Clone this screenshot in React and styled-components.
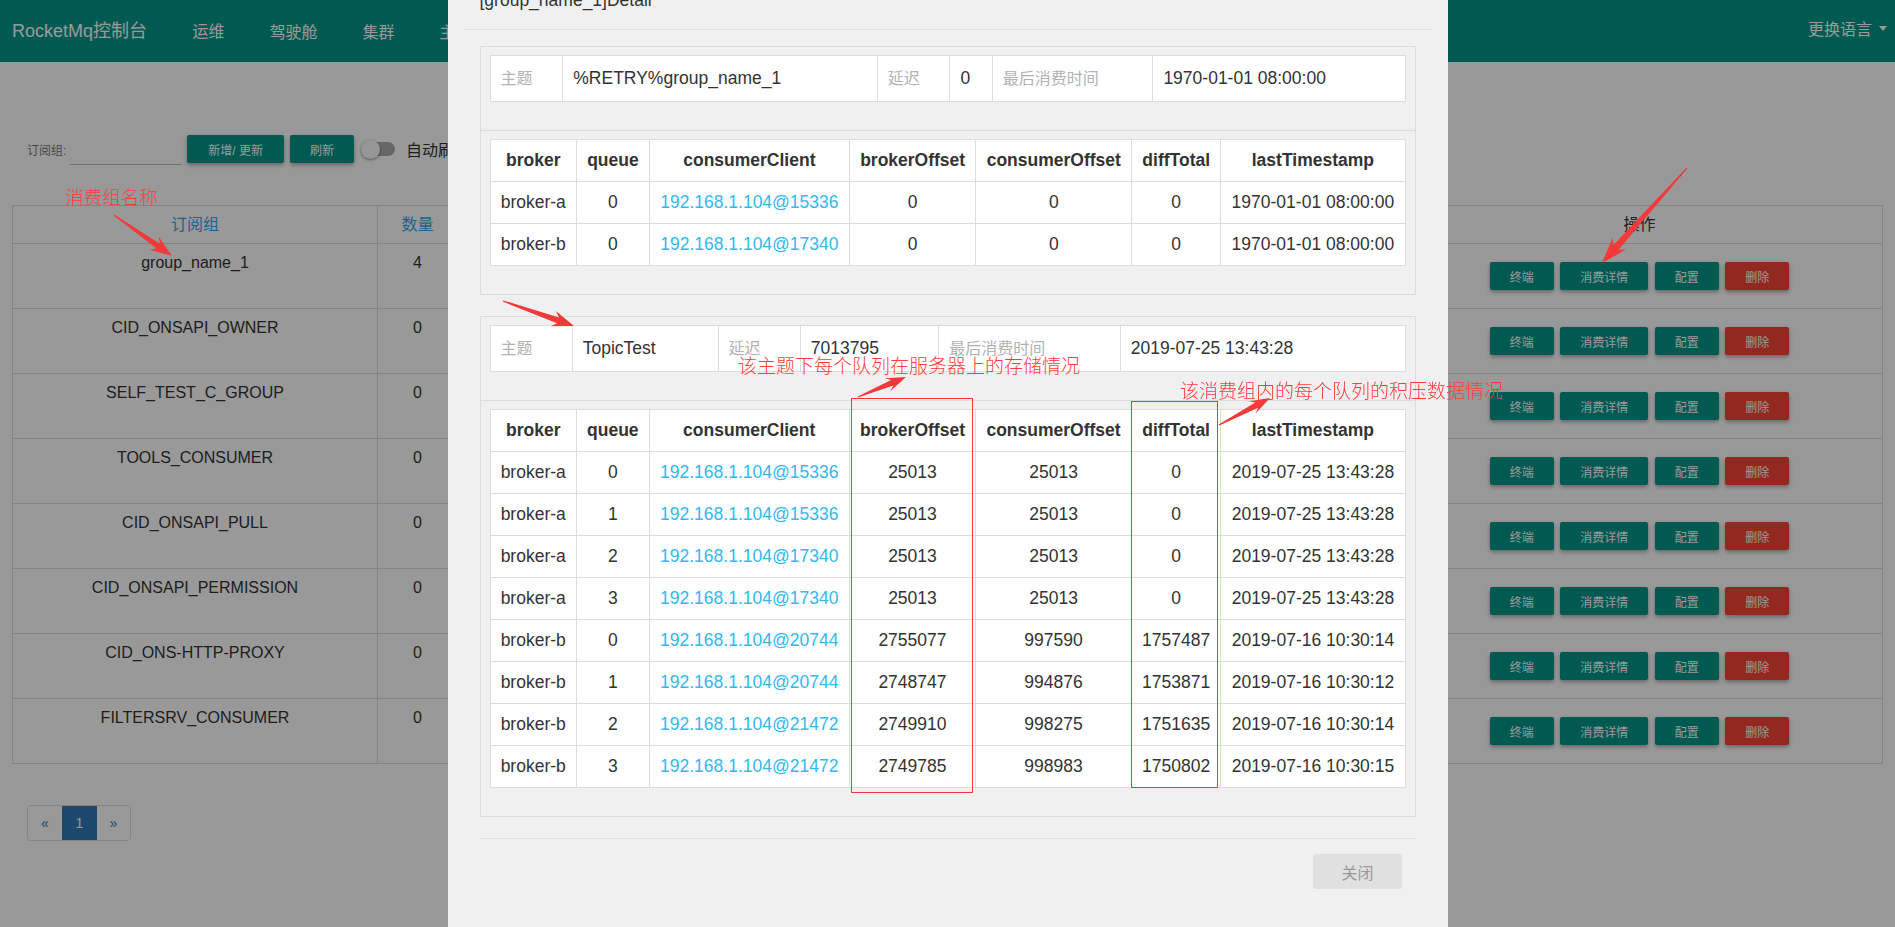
import React from "react";
import styled, { createGlobalStyle } from "styled-components";

const GlobalStyle = createGlobalStyle`
  * { box-sizing: border-box; }
  html, body {
    margin: 0;
    padding: 0;
    height: 100%;
    overflow: hidden;
    background: #fff;
  }
  body {
    font-family: "Liberation Sans", "Noto Sans CJK SC", sans-serif;
    color: #333;
  }
`;

/* ---------- page behind the modal ---------- */

const NavBar = styled.div`
  height: 62px;
  background: #009688;
  display: flex;
  align-items: center;
  padding: 0 8px 0 12px;
  color: #fff;
  white-space: nowrap;
`;

const Brand = styled.div`
  font-size: 18px;
  margin-right: 23px;
  margin-top: -4px;
`;

const NavItem = styled.div`
  font-size: 16px;
  padding: 0 22.5px;
  margin-top: ${(p) => p.$dy || 0}px;
`;

const LangMenu = styled.div`
  margin-left: auto;
  margin-top: -6px;
  font-size: 16px;
  display: flex;
  align-items: center;
  gap: 7px;
`;

const Caret = styled.span`
  width: 0;
  height: 0;
  border-top: 5px solid #fff;
  border-left: 4px solid transparent;
  border-right: 4px solid transparent;
`;

const Toolbar = styled.div`
  display: flex;
  align-items: center;
  height: 28px;
  margin-top: 73px;
  padding-left: 27px;
`;

const FieldLabel = styled.label`
  font-size: 12px;
  color: #777;
`;

const SearchInput = styled.input`
  width: 112px;
  height: 22px;
  margin: 10px 0 0 4px;
  border: none;
  border-bottom: 1px solid #bbb;
  background: transparent;
  outline: none;
`;

const RaisedButton = styled.button`
  height: 28px;
  padding: 0 ${(p) => p.$pad || 20}px;
  margin-left: ${(p) => p.$gap || 0}px;
  border: none;
  border-radius: 2px;
  background: ${(p) => (p.$danger ? "#f44336" : "#009688")};
  color: #fff;
  font-family: inherit;
  font-size: 12px;
  box-shadow: 0 2px 4px rgba(0, 0, 0, 0.35);
`;

const Switch = styled.div`
  position: relative;
  width: 35px;
  height: 20px;
  margin-left: 7px;
  display: flex;
  align-items: center;
`;

const SwitchTrack = styled.div`
  width: 33px;
  height: 14px;
  margin-left: 1px;
  border-radius: 7px;
  background: #aaa;
`;

const SwitchKnob = styled.div`
  position: absolute;
  left: 0;
  top: 1px;
  width: 19px;
  height: 19px;
  border-radius: 50%;
  background: #fafafa;
  box-shadow: 0 1px 3px rgba(0, 0, 0, 0.45);
`;

const SwitchText = styled.span`
  margin-left: 10px;
  font-size: 16px;
  color: #333;
  white-space: nowrap;
`;

const GroupTable = styled.table`
  width: calc(100% - 24px);
  margin: 42px 12px 0;
  border-collapse: collapse;
  table-layout: fixed;
  font-size: 16px;
`;

const GroupTh = styled.th`
  padding: 8px;
  line-height: 21px;
  border: 1px solid #ddd;
  font-weight: normal;
  text-align: center;
  color: ${(p) => (p.$link ? "#3aa3e3" : "#333")};
`;

const GroupTd = styled.td`
  padding: 8px;
  line-height: 22px;
  border: 1px solid #ddd;
  text-align: center;
  vertical-align: top;
  color: #333;
`;

const ActionRow = styled.div`
  display: flex;
  justify-content: center;
  gap: 6.5px;
  margin: 10px 0;
`;

const Pager = styled.div`
  display: inline-flex;
  margin: 41px 0 0 27px;
  border: 1px solid #ddd;
  border-radius: 4px;
  overflow: hidden;
`;

const PageCell = styled.div`
  width: ${(p) => p.$w}px;
  height: 34px;
  display: flex;
  align-items: center;
  justify-content: center;
  font-size: 14px;
  background: ${(p) => (p.$active ? "#337ab7" : "#fff")};
  color: ${(p) => (p.$active ? "#fff" : "#337ab7")};
`;

/* ---------- modal ---------- */

const Backdrop = styled.div`
  position: fixed;
  inset: 0;
  background: rgba(0, 0, 0, 0.4);
`;

const ModalLayer = styled.div`
  position: fixed;
  inset: 0;
  display: flex;
  justify-content: center;
  align-items: flex-start;
`;

const Dialog = styled.div`
  width: 1000px;
  margin-top: -28px;
  background: #f0f0f0;
  font-size: 17.5px;
  color: #333;
`;

const DialogHeader = styled.div`
  padding: 16px 16px 0;
`;

const DialogTitle = styled.div`
  padding: 0 16px 17px;
  line-height: 24px;
  border-bottom: 1px solid #e2e2e2;
`;

const DialogBody = styled.div`
  padding: 16px 32px 0;
`;

const Panel = styled.div`
  border: 1px solid #dcdcdc;
  margin-bottom: 21px;
`;

const PanelSection = styled.div`
  padding: 8px 9px;
  & + & {
    border-top: 1px solid #dcdcdc;
  }
`;

const InfoTable = styled.table`
  width: 100%;
  margin-bottom: 20px;
  border-collapse: collapse;
  background: #fff;
`;

const InfoCell = styled.td`
  padding: 12px 10px;
  line-height: 21px;
  border: 1px solid #ddd;
  white-space: nowrap;
  font-size: ${(p) => (p.$label ? "16px" : "17.5px")};
  color: ${(p) => (p.$label ? "#b3b3b3" : "#333")};
`;

const OffsetTable = styled.table`
  width: 100%;
  margin-bottom: 20px;
  border-collapse: collapse;
  background: #fff;
`;

const OffsetTh = styled.th`
  padding: 10px;
  line-height: 21px;
  border: 1px solid #ddd;
  font-weight: bold;
  white-space: nowrap;
  color: #333;
`;

const OffsetTd = styled.td`
  padding: 10px;
  line-height: 21px;
  border: 1px solid #ddd;
  text-align: center;
  white-space: nowrap;
  color: ${(p) => (p.$link ? "#33b8f2" : "#333")};
`;

const DialogFooter = styled.div`
  margin: 0 32px;
  padding: 15px 14px 40px;
  border-top: 1px solid #e2e2e2;
  display: flex;
  justify-content: flex-end;
`;

const CloseButton = styled.button`
  height: 35px;
  padding: 0 28px;
  border: none;
  border-radius: 3px;
  background: #e0e0e0;
  color: #999;
  font-family: inherit;
  font-size: 16px;
`;

/* ---------- screenshot annotations ---------- */

const NoteLayer = styled.div`
  position: fixed;
  inset: 0;
  pointer-events: none;
`;

const Note = styled.div`
  position: absolute;
  left: ${(p) => p.$x}px;
  top: ${(p) => p.$y}px;
  font-family: "Noto Sans CJK SC", sans-serif;
  font-size: ${(p) => p.$size}px;
  font-weight: 300;
  line-height: 1;
  white-space: nowrap;
  color: #ff3d3d;
`;

const NoteCanvas = styled.svg`
  position: absolute;
  left: 0;
  top: 0;
`;

const arrowPoints = (x1, y1, x2, y2, head = 20, wing = 8, neck = 3) => {
  const dx = x2 - x1;
  const dy = y2 - y1;
  const len = Math.hypot(dx, dy);
  const ux = dx / len;
  const uy = dy / len;
  const nx = -uy;
  const ny = ux;
  const bx = x2 - ux * head;
  const by = y2 - uy * head;
  const pts = [
    [x1 + nx * 0.6, y1 + ny * 0.6],
    [bx + ux * 3 + nx * neck, by + uy * 3 + ny * neck],
    [bx - ux * 2 + nx * wing, by - uy * 2 + ny * wing],
    [x2, y2],
    [bx - ux * 2 - nx * wing, by - uy * 2 - ny * wing],
    [bx + ux * 3 - nx * neck, by + uy * 3 - ny * neck],
    [x1 - nx * 0.6, y1 - ny * 0.6],
  ];
  return pts.map((p) => p.map((v) => v.toFixed(1)).join(",")).join(" ");
};

const arrows = [
  [114, 215, 172, 256],
  [1687, 168, 1602, 263, 24, 9, 3.5],
  [503, 301, 574, 326],
  [858, 397, 906, 377, 18, 7, 3],
  [1219, 425, 1270, 398, 18, 7, 3],
];

/* ---------- data ---------- */

const navItems = ["运维", "驾驶舱", "集群", "主题", "消费", "生产者", "消息", "消息轨迹"];

const groups = [
  ["group_name_1", 4],
  ["CID_ONSAPI_OWNER", 0],
  ["SELF_TEST_C_GROUP", 0],
  ["TOOLS_CONSUMER", 0],
  ["CID_ONSAPI_PULL", 0],
  ["CID_ONSAPI_PERMISSION", 0],
  ["CID_ONS-HTTP-PROXY", 0],
  ["FILTERSRV_CONSUMER", 0],
];

const offsetHeads = [
  "broker",
  "queue",
  "consumerClient",
  "brokerOffset",
  "consumerOffset",
  "diffTotal",
  "lastTimestamp",
];

const sections = [
  {
    topic: "%RETRY%group_name_1",
    delay: "0",
    last: "1970-01-01 08:00:00",
    rows: [
      ["broker-a", 0, "192.168.1.104@15336", 0, 0, 0, "1970-01-01 08:00:00"],
      ["broker-b", 0, "192.168.1.104@17340", 0, 0, 0, "1970-01-01 08:00:00"],
    ],
  },
  {
    topic: "TopicTest",
    delay: "7013795",
    last: "2019-07-25 13:43:28",
    rows: [
      ["broker-a", 0, "192.168.1.104@15336", 25013, 25013, 0, "2019-07-25 13:43:28"],
      ["broker-a", 1, "192.168.1.104@15336", 25013, 25013, 0, "2019-07-25 13:43:28"],
      ["broker-a", 2, "192.168.1.104@17340", 25013, 25013, 0, "2019-07-25 13:43:28"],
      ["broker-a", 3, "192.168.1.104@17340", 25013, 25013, 0, "2019-07-25 13:43:28"],
      ["broker-b", 0, "192.168.1.104@20744", 2755077, 997590, 1757487, "2019-07-16 10:30:14"],
      ["broker-b", 1, "192.168.1.104@20744", 2748747, 994876, 1753871, "2019-07-16 10:30:12"],
      ["broker-b", 2, "192.168.1.104@21472", 2749910, 998275, 1751635, "2019-07-16 10:30:14"],
      ["broker-b", 3, "192.168.1.104@21472", 2749785, 998983, 1750802, "2019-07-16 10:30:15"],
    ],
  },
];

const ConsumerSection = ({ data }) => (
  <Panel>
    <PanelSection>
      <InfoTable>
        <tbody>
          <tr>
            <InfoCell $label>主题</InfoCell>
            <InfoCell>{data.topic}</InfoCell>
            <InfoCell $label>延迟</InfoCell>
            <InfoCell>{data.delay}</InfoCell>
            <InfoCell $label>最后消费时间</InfoCell>
            <InfoCell>{data.last}</InfoCell>
          </tr>
        </tbody>
      </InfoTable>
    </PanelSection>
    <PanelSection>
      <OffsetTable>
        <thead>
          <tr>
            {offsetHeads.map((h) => (
              <OffsetTh key={h}>{h}</OffsetTh>
            ))}
          </tr>
        </thead>
        <tbody>
          {data.rows.map((r, i) => (
            <tr key={i}>
              {r.map((v, j) => (
                <OffsetTd key={j} $link={j === 2}>
                  {v}
                </OffsetTd>
              ))}
            </tr>
          ))}
        </tbody>
      </OffsetTable>
    </PanelSection>
  </Panel>
);

const App = () => {
  return (
    <>
      <GlobalStyle />
      <NavBar>
        <Brand>RocketMq控制台</Brand>
        {navItems.map((n, i) => (
          <NavItem key={n} $dy={i === 0 ? -3 : 0}>
            {n}
          </NavItem>
        ))}
        <LangMenu>
          更换语言 <Caret />
        </LangMenu>
      </NavBar>

      <Toolbar>
        <FieldLabel>订阅组:</FieldLabel>
        <SearchInput />
        <RaisedButton $gap={5} $pad={21}>
          新增/ 更新
        </RaisedButton>
        <RaisedButton $gap={6}>刷新</RaisedButton>
        <Switch>
          <SwitchTrack />
          <SwitchKnob />
        </Switch>
        <SwitchText>自动刷新</SwitchText>
      </Toolbar>

      <GroupTable>
        <colgroup>
          <col style={{ width: 365 }} />
          <col style={{ width: 80 }} />
          <col />
          <col />
          <col />
          <col />
          <col />
          <col style={{ width: 486 }} />
        </colgroup>
        <thead>
          <tr>
            <GroupTh $link>订阅组</GroupTh>
            <GroupTh $link>数量</GroupTh>
            <GroupTh>版本</GroupTh>
            <GroupTh>类型</GroupTh>
            <GroupTh>模式</GroupTh>
            <GroupTh $link>TPS</GroupTh>
            <GroupTh $link>延迟</GroupTh>
            <GroupTh>操作</GroupTh>
          </tr>
        </thead>
        <tbody>
          {groups.map(([name, count]) => (
            <tr key={name}>
              <GroupTd>{name}</GroupTd>
              <GroupTd>{count}</GroupTd>
              <GroupTd>V4_3_0</GroupTd>
              <GroupTd>PUSH</GroupTd>
              <GroupTd>CLUSTERING</GroupTd>
              <GroupTd>0</GroupTd>
              <GroupTd>0</GroupTd>
              <GroupTd>
                <ActionRow>
                  <RaisedButton>终端</RaisedButton>
                  <RaisedButton>消费详情</RaisedButton>
                  <RaisedButton>配置</RaisedButton>
                  <RaisedButton $danger>删除</RaisedButton>
                </ActionRow>
              </GroupTd>
            </tr>
          ))}
        </tbody>
      </GroupTable>

      <Pager>
        <PageCell $w={34}>«</PageCell>
        <PageCell $w={35} $active>
          1
        </PageCell>
        <PageCell $w={33}>»</PageCell>
      </Pager>

      <Backdrop />
      <ModalLayer>
        <Dialog>
          <DialogHeader>
            <DialogTitle>[group_name_1]Detail</DialogTitle>
          </DialogHeader>
          <DialogBody>
            {sections.map((s) => (
              <ConsumerSection key={s.topic} data={s} />
            ))}
          </DialogBody>
          <DialogFooter>
            <CloseButton>关闭</CloseButton>
          </DialogFooter>
        </Dialog>
      </ModalLayer>

      <NoteLayer>
        <NoteCanvas width="1895" height="927" viewBox="0 0 1895 927">
          {arrows.map((a, i) => (
            <polygon key={i} points={arrowPoints(...a)} fill="#f23a3a" />
          ))}
          <rect x="851.5" y="398.5" width="121" height="394" fill="none" stroke="#f23a3a" strokeWidth="1" />
          <rect x="1131.5" y="401.5" width="86" height="386" fill="none" stroke="#f23a3a" strokeWidth="1" />
        </NoteCanvas>
        <Note $x={65} $y={187} $size={18.5}>
          消费组名称
        </Note>
        <Note $x={738} $y={355} $size={19}>
          该主题下每个队列在服务器上的存储情况
        </Note>
        <Note $x={1180} $y={380} $size={19}>
          该消费组内的每个队列的积压数据情况
        </Note>
      </NoteLayer>
    </>
  );
};

export default App;
